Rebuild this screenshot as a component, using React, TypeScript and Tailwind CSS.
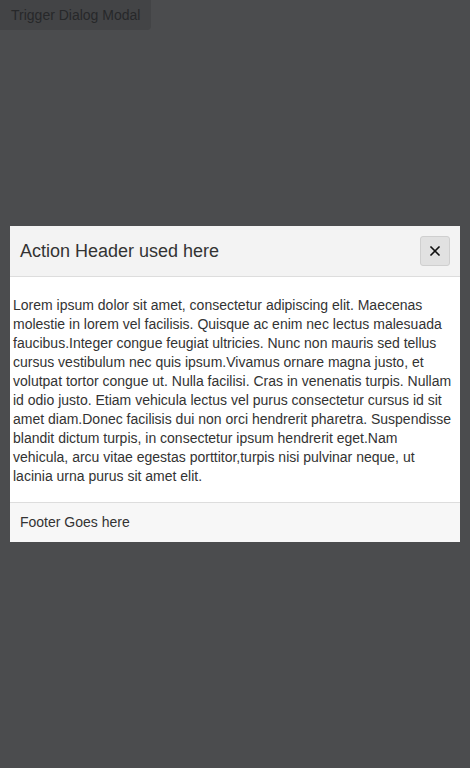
import { X } from 'lucide-react'

const body =
  'Lorem ipsum dolor sit amet, consectetur adipiscing elit. Maecenas molestie in lorem vel facilisis. Quisque ac enim nec lectus malesuada faucibus.Integer congue feugiat ultricies. Nunc non mauris sed tellus cursus vestibulum nec quis ipsum.Vivamus ornare magna justo, et volutpat tortor congue ut. Nulla facilisi. Cras in venenatis turpis. Nullam id odio justo. Etiam vehicula lectus vel purus consectetur cursus id sit amet diam.Donec facilisis dui non orci hendrerit pharetra. Suspendisse blandit dictum turpis, in consectetur ipsum hendrerit eget.Nam vehicula, arcu vitae egestas porttitor,turpis nisi pulvinar neque, ut lacinia urna purus sit amet elit.'

export default function App() {
  return (
    <div
      className="relative h-[768px] w-full bg-[#4b4c4e]"
      style={{ fontFamily: '"Liberation Sans", Arial, sans-serif' }}
    >
      {/* Trigger behind overlay */}
      <button className="h-[30px] rounded-br-[4px] bg-[#434446] px-[11px] text-[14px] text-[#27282a]">
        Trigger Dialog Modal
      </button>

      {/* Dialog */}
      <div className="absolute left-[10px] top-[226px] w-[450px] bg-white">
        <div className="flex h-[51px] items-center justify-between border-b border-[#dddddd] bg-[#f3f3f3] pl-[10px] pr-[10px]">
          <h2 className="text-[18px] text-[#333333]">Action Header used here</h2>
          <button className="flex h-[30px] w-[30px] items-center justify-center rounded-[3px] border border-[#cfcfcf] bg-[#e1e1e1] text-[#111111]">
            <X className="h-[16px] w-[16px]" strokeWidth={2.6} />
          </button>
        </div>
        <div className="pb-[16px] pl-[3px] pr-[5px] pt-[19px]">
          <p className="text-[14px] leading-[19px] text-[#333333]">{body}</p>
        </div>
        <div className="flex h-[40px] items-center border-t border-[#dddddd] bg-[#f7f7f7] pl-[10px]">
          <span className="text-[14px] text-[#333333]">Footer Goes here</span>
        </div>
      </div>
    </div>
  )
}
